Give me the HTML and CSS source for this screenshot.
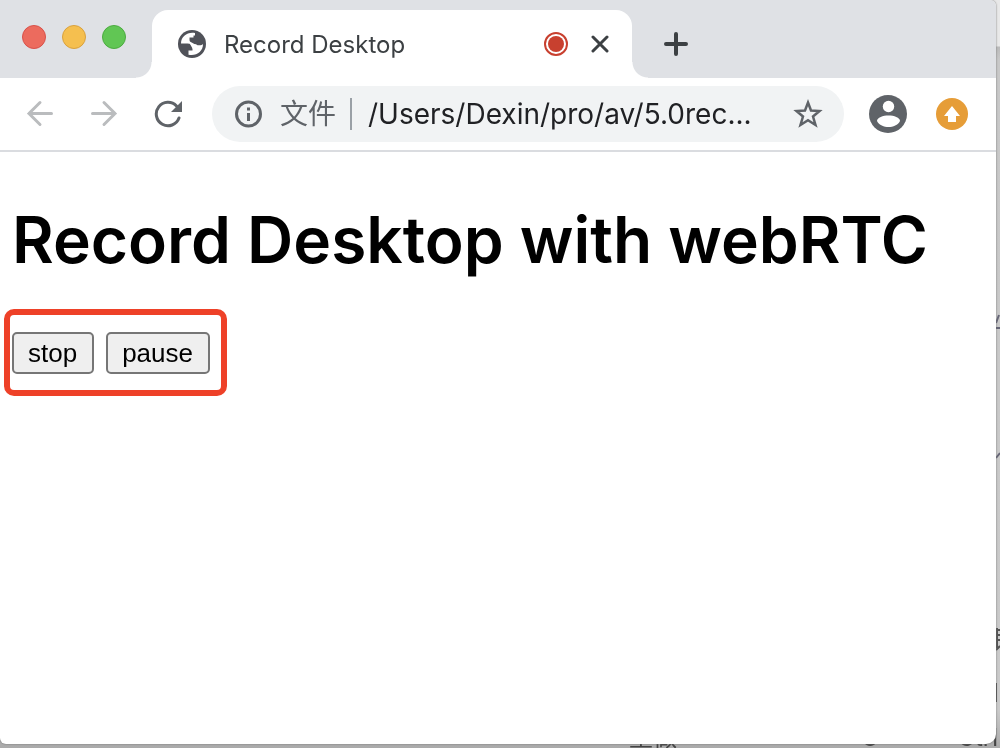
FILE: index.html
```
<!DOCTYPE html>
<html lang="zh-CN">
<head>
    <meta charset="UTF-8">
    <meta name="viewport" content="width=device-width, initial-scale=1.0">
    <title>Record Desktop</title>
    <link rel="stylesheet" href="styles.css">
</head>
<body>
    <!-- Document that lies behind the browser window -->
    <div class="backdrop" aria-hidden="true">
        <svg class="backdrop-marks" width="4" height="748" viewBox="0 0 4 748">
            <path d="M0 323L3 315M0 328H4M0 458L4 453" fill="none" stroke="#667" stroke-width="2"/>
            <path d="M0 630H4M0 635H4M0 640H4M1 628V648M0 650L4 646M0 683V702" fill="none" stroke="#555" stroke-width="2"/>
        </svg>
        <div class="backdrop-footer">
            <span class="backdrop-action">重做</span>
            <span class="backdrop-icon">O</span>
            <span class="backdrop-key">Ctrl</span>
        </div>
    </div>

    <div class="window">
        <header class="tab-strip">
            <div class="lights">
                <button class="light close" aria-label="Close window"></button>
                <button class="light minimize" aria-label="Minimize window"></button>
                <button class="light maximize" aria-label="Zoom window"></button>
            </div>
            <div class="tab">
                <svg class="globe" viewBox="0 0 28 28" aria-hidden="true">
                    <circle cx="14" cy="14" r="14" fill="#505259"/>
                    <path d="M17 3C10 1.500 3 6 3 13.500H9.500C12.500 13.500 14.500 15 14.500 17.500V20.500H10.500V24.700C18 26.500 25.200 21.500 25 14C24 15.500 20 16 18 14.200H16.500C13.500 14 11.500 12.500 11.500 10V7.500H15.500V5.500H17Z" fill="#fff"/>
                    <path d="M11 11L19 15.500L16 21L12 14Z" fill="#fff"/>
                </svg>
                <span class="tab-title">Record Desktop</span>
                <svg class="record" viewBox="0 0 24 24" aria-label="Recording" role="img">
                    <circle cx="12" cy="12" r="11" fill="none" stroke="#c8402f" stroke-width="2"/>
                    <circle cx="12" cy="12" r="8" fill="#c8402f"/>
                </svg>
                <button class="icon-button tab-close" aria-label="Close tab">
                    <svg width="18" height="18" viewBox="0 0 18 18"><path d="M2 2L16 16M16 2L2 16"/></svg>
                </button>
            </div>
            <button class="icon-button new-tab" aria-label="New tab">
                <svg width="24" height="24" viewBox="0 0 24 24"><path d="M12 2V22M2 12H22"/></svg>
            </button>
        </header>

        <nav class="toolbar">
            <button class="icon-button arrow" aria-label="Back">
                <svg width="28" height="28" viewBox="0 0 28 28"><path d="M25.500 13.500H3M14 2.500L3 13.500L14 24.500"/></svg>
            </button>
            <button class="icon-button arrow" aria-label="Forward">
                <svg width="28" height="28" viewBox="0 0 28 28"><path d="M2.500 13.500H25M14 2.500L25 13.500L14 24.500"/></svg>
            </button>
            <button class="icon-button reload" aria-label="Reload">
                <svg width="28" height="28" viewBox="0 0 28 28">
                    <path d="M25 18A11.700 11.700 0 1 1 22.500 6" fill="none" stroke="#5f6368" stroke-width="3" stroke-linecap="round"/>
                    <path d="M28 1V12H17Z" fill="#5f6368"/>
                </svg>
            </button>
            <div class="omnibox">
                <svg width="28" height="28" viewBox="0 0 28 28" aria-hidden="true">
                    <circle cx="14.500" cy="14" r="12" fill="none" stroke="#5f6368" stroke-width="3"/>
                    <path d="M13 7.500h3v3h-3zM13 13h3v8h-3z" fill="#5f6368"/>
                </svg>
                <label class="scheme" for="address">文件</label>
                <input class="address" id="address" type="text" value="/Users/Dexin/pro/av/5.0rec...">
                <button class="icon-button" aria-label="Bookmark">
                    <svg width="32" height="32" viewBox="0 0 32 32">
                        <path d="M16 4.500L19 12.500L27.500 13L21 18.500L23.500 27L16 22.200L8.500 27L11 18.500L4.500 13L13 12.500Z" fill="none" stroke="#5f6368" stroke-width="2.500"/>
                    </svg>
                </button>
            </div>
            <button class="icon-button" aria-label="Profile">
                <svg width="38" height="38" viewBox="0 0 38 38">
                    <circle cx="19" cy="19" r="19" fill="#5f6368"/>
                    <circle cx="19.500" cy="11.500" r="5.700" fill="#fff"/>
                    <path d="M8 26C8 22.500 14 20.500 19.500 20.500S31 22.500 31 26C29 30 24 32 19.500 32S10 30 8 26Z" fill="#fff"/>
                </svg>
            </button>
            <button class="icon-button update" aria-label="Update">
                <svg width="32" height="32" viewBox="0 0 32 32">
                    <circle cx="16" cy="16" r="16" fill="#e69d38"/>
                    <path d="M16 8L24 18H20V24H12V18H8Z" fill="#fff"/>
                </svg>
            </button>
        </nav>

        <main class="page">
            <h1>Record Desktop with webRTC</h1>
            <div class="controls">
                <button class="control">stop</button>
                <button class="control">pause</button>
            </div>
        </main>
    </div>
</body>
</html>
```
FILE: styles.css
```
* {
    box-sizing: border-box;
}

body {
    margin: 0;
    background: #c8c8c8;
    font-family: Inter, "Noto Sans CJK SC", sans-serif;
}

.backdrop {
    position: fixed;
    inset: 0;
    display: flex;
    align-items: flex-end;
    background: linear-gradient(#e8e8e8 46px, #bbb 47px, #c8c8c8 60px, #cacaca 95%, #aaa);
}

.backdrop-marks {
    position: absolute;
    top: 0;
    right: 0;
}

.backdrop-footer {
    display: flex;
    flex: 1;
    justify-content: flex-end;
    padding-right: 2px;
    color: #444;
    font-size: 24px;
    line-height: 20px;
}

.backdrop-action {
    margin-right: 184px;
}

.backdrop-icon {
    margin-right: 78px;
}

.window {
    position: relative;
    display: flex;
    flex-direction: column;
    min-height: calc(100vh - 4px);
    margin: 0 4px 4px 0;
    background: #fff;
    border-radius: 0 6px 10px 6px;
    box-shadow: 0 0 2px #666;
    overflow: hidden;
}

.icon-button {
    display: flex;
    flex: none;
    padding: 0;
    border: none;
    background: none;
}

.tab-strip {
    display: flex;
    align-items: flex-end;
    height: 78px;
    background: #dfe1e5;
}

.lights {
    display: flex;
    gap: 16px;
    align-self: flex-start;
    width: 152px;
    padding: 25px 0 0 22px;
}

.light {
    width: 24px;
    height: 24px;
    padding: 0;
    border: 1px solid;
    border-radius: 50%;
}

.close {
    background: #ec6b5e;
    border-color: #d8514a;
}

.minimize {
    background: #f5bf4f;
    border-color: #d9a13e;
}

.maximize {
    background: #61c654;
    border-color: #4cab40;
}

.tab {
    position: relative;
    display: flex;
    align-items: center;
    width: 480px;
    height: 68px;
    padding: 0 23px 0 26px;
    background: #fff;
    border-radius: 16px 16px 0 0;
}

.tab::before,
.tab::after {
    content: "";
    position: absolute;
    bottom: 0;
    width: 16px;
    height: 16px;
}

.tab::before {
    right: 100%;
    background: radial-gradient(circle at 0 0, #dfe1e5 15px, #fff 16px);
}

.tab::after {
    left: 100%;
    background: radial-gradient(circle at 100% 0, #dfe1e5 15px, #fff 16px);
}

.globe {
    width: 28px;
    height: 28px;
    margin-right: 18px;
}

.tab-title {
    flex: 1;
    color: #3c4043;
    font-size: 24px;
}

.record {
    width: 24px;
    height: 24px;
    margin-right: 23px;
}

.tab-close path,
.new-tab path {
    fill: none;
    stroke: #3c4043;
    stroke-width: 3;
    stroke-linecap: round;
}

.new-tab {
    margin: 0 0 22px 32px;
}

.new-tab path {
    stroke-width: 4;
}

.toolbar {
    display: flex;
    align-items: center;
    height: 74px;
    padding: 0 28px 0 26px;
    border-bottom: 2px solid #dadce0;
}

.arrow {
    margin-right: 36px;
}

.arrow path {
    fill: none;
    stroke: #babcbe;
    stroke-width: 3;
    stroke-linecap: round;
}

.reload {
    margin-right: 30px;
}

.omnibox {
    display: flex;
    flex: 1;
    align-items: center;
    min-width: 0;
    height: 56px;
    margin-right: 25px;
    padding: 0 20px 0 22px;
    background: #f1f3f4;
    border-radius: 28px;
}

.scheme {
    margin-left: 18px;
    padding-right: 14px;
    border-right: 2px solid #9aa0a6;
    color: #5f6368;
    font-size: 28px;
    line-height: 32px;
}

.address {
    flex: 1;
    min-width: 0;
    padding: 0 0 0 16px;
    border: none;
    outline: none;
    background: none;
    color: #202124;
    font-family: inherit;
    font-size: 28px;
}

.update {
    margin-left: 29px;
}

.page {
    flex: 1;
    padding: 48px 4px;
}

h1 {
    margin: 0 0 29px 8px;
    font-size: 64px;
    font-weight: 600;
    line-height: 80px;
}

.controls {
    display: inline-flex;
    gap: 12px;
    padding: 17px 11px 16px 2px;
    border: 6px solid #ee4128;
    border-radius: 10px;
}

.control {
    height: 42px;
    padding: 0 15px 0 14px;
    border: 2px solid #767676;
    border-radius: 5px;
    background: #efefef;
    color: #000;
    font-family: "Liberation Sans", Arial, sans-serif;
    font-size: 26px;
}
```
